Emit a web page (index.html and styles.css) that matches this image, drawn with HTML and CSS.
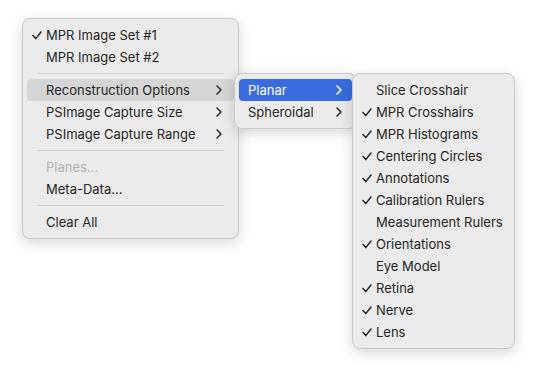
FILE: index.html
```html
<!DOCTYPE html>
<html lang="en">
<head>
    <meta charset="UTF-8">
    <title>MPR Context Menu</title>
    <link rel="stylesheet" href="styles.css">
</head>
<body>
    <div class="stage">
        <div class="menu main-menu">
            <div class="item">
                <svg class="check" viewBox="0 0 10 9"><polyline points="1,4.6 3.8,7.6 9,1"/></svg>
                <span>MPR Image Set #1</span>
            </div>
            <div class="item"><span>MPR Image Set #2</span></div>
            <div class="separator"></div>
            <div class="item open">
                <span>Reconstruction Options</span>
                <svg class="chevron" viewBox="0 0 6 10"><polyline points="1,1 5,5 1,9"/></svg>
            </div>
            <div class="item">
                <span>PSImage Capture Size</span>
                <svg class="chevron" viewBox="0 0 6 10"><polyline points="1,1 5,5 1,9"/></svg>
            </div>
            <div class="item">
                <span>PSImage Capture Range</span>
                <svg class="chevron" viewBox="0 0 6 10"><polyline points="1,1 5,5 1,9"/></svg>
            </div>
            <div class="separator"></div>
            <div class="item disabled"><span>Planes...</span></div>
            <div class="item"><span>Meta-Data...</span></div>
            <div class="separator"></div>
            <div class="item"><span>Clear All</span></div>
        </div>

        <!-- Reconstruction Options submenu -->
        <div class="menu shape-menu">
            <div class="item selected">
                <span>Planar</span>
                <svg class="chevron" viewBox="0 0 6 10"><polyline points="1,1 5,5 1,9"/></svg>
            </div>
            <div class="item">
                <span>Spheroidal</span>
                <svg class="chevron" viewBox="0 0 6 10"><polyline points="1,1 5,5 1,9"/></svg>
            </div>
        </div>

        <!-- Planar submenu -->
        <div class="menu overlay-menu">
            <div class="item"><span>Slice Crosshair</span></div>
            <div class="item">
                <svg class="check" viewBox="0 0 10 9"><polyline points="1,4.6 3.8,7.6 9,1"/></svg>
                <span>MPR Crosshairs</span>
            </div>
            <div class="item">
                <svg class="check" viewBox="0 0 10 9"><polyline points="1,4.6 3.8,7.6 9,1"/></svg>
                <span>MPR Histograms</span>
            </div>
            <div class="item">
                <svg class="check" viewBox="0 0 10 9"><polyline points="1,4.6 3.8,7.6 9,1"/></svg>
                <span>Centering Circles</span>
            </div>
            <div class="item">
                <svg class="check" viewBox="0 0 10 9"><polyline points="1,4.6 3.8,7.6 9,1"/></svg>
                <span>Annotations</span>
            </div>
            <div class="item">
                <svg class="check" viewBox="0 0 10 9"><polyline points="1,4.6 3.8,7.6 9,1"/></svg>
                <span>Calibration Rulers</span>
            </div>
            <div class="item"><span>Measurement Rulers</span></div>
            <div class="item">
                <svg class="check" viewBox="0 0 10 9"><polyline points="1,4.6 3.8,7.6 9,1"/></svg>
                <span>Orientations</span>
            </div>
            <div class="item"><span>Eye Model</span></div>
            <div class="item">
                <svg class="check" viewBox="0 0 10 9"><polyline points="1,4.6 3.8,7.6 9,1"/></svg>
                <span>Retina</span>
            </div>
            <div class="item">
                <svg class="check" viewBox="0 0 10 9"><polyline points="1,4.6 3.8,7.6 9,1"/></svg>
                <span>Nerve</span>
            </div>
            <div class="item">
                <svg class="check" viewBox="0 0 10 9"><polyline points="1,4.6 3.8,7.6 9,1"/></svg>
                <span>Lens</span>
            </div>
        </div>
    </div>
</body>
</html>
```

FILE: styles.css
```css
html, body {
    height: 100%;
}

body {
    box-sizing: border-box;
    margin: 0;
    padding: 18px 0 0 22px;
    background-color: #fff;
    font-family: 'Inter', 'Liberation Sans', sans-serif;
    font-size: 13px;
    color: #262626;
}

.stage {
    position: relative;
    height: 100%;
}

.menu {
    box-sizing: border-box;
    display: flex;
    flex-direction: column;
    padding: 5px 4px;
    background-color: #ebebeb;
    border: 1px solid #c9c9c9;
    border-radius: 8px;
    box-shadow: 0 4px 14px rgba(0, 0, 0, 0.16);
}

.main-menu {
    width: 217px;
}

/* submenus sit over the menu that opened them */
.shape-menu {
    position: absolute;
    left: 212px;
    top: 55px;
    width: 123px;
}

.overlay-menu {
    position: absolute;
    left: 330px;
    top: 55px;
    width: 163px;
}

.item {
    position: relative;
    display: flex;
    align-items: center;
    height: 22px;
    padding: 0 12px 0 19px;
    border-radius: 4px;
    white-space: nowrap;
}

.item span {
    flex: 1;
}

.shape-menu .item {
    padding: 0 10px 0 9px;
}

.overlay-menu .item {
    padding-left: 19px;
}

.item.open {
    background-color: #d5d5d5;
}

.item.selected {
    background-color: #3a6cdf;
    color: #fff;
}

.item.disabled {
    color: #b3b3b3;
}

.check {
    position: absolute;
    left: 5px;
    top: 7px;
    width: 10px;
    height: 9px;
    fill: none;
    stroke: #262626;
    stroke-width: 1.5;
    stroke-linecap: round;
    stroke-linejoin: round;
}

.chevron {
    width: 6px;
    height: 10px;
    fill: none;
    stroke: currentColor;
    stroke-width: 1.5;
    stroke-linecap: round;
    stroke-linejoin: round;
}

.separator {
    height: 1px;
    margin: 5px 10px;
    background-color: #d0d0d0;
}
```
